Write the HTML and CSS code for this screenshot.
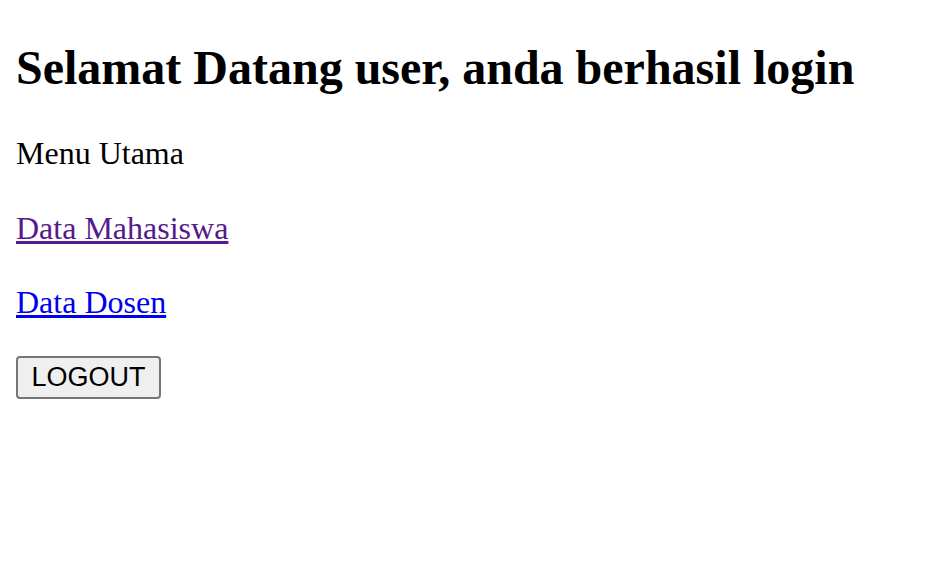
FILE: index.html
```html
<!DOCTYPE html>
<html>
<head>
<meta charset="utf-8">
<title>Menu Utama</title>
<link rel="stylesheet" href="styles.css">
</head>
<body>
<h1 class="title">Selamat Datang user, anda berhasil login</h1>
<p class="line">Menu Utama</p>
<p class="line"><a class="link visited" href="#mhs">Data Mahasiswa</a></p>
<p class="line last"><a class="link" href="#dosen">Data Dosen</a></p>
<button class="logout" type="button">LOGOUT</button>
</body>
</html>
```
FILE: styles.css
```css
body {
  margin: 16px;
  font-family: "Liberation Serif", "Times New Roman", serif;
  font-size: 32px;
  color: #000;
  background: #fff;
}
.title {
  font-size: 48px;
  font-weight: bold;
  margin: 24px 0 40px;
  line-height: 55px;
}
.line {
  margin: 0 0 37.5px;
  line-height: 37px;
}
.line.last {
  margin-bottom: 34.5px;
}
.link {
  color: #0000ee;
  text-decoration: underline;
}
.link.visited {
  color: #551a8b;
}
.logout {
  display: block;
  font-family: "Liberation Sans", Arial, sans-serif;
  font-size: 27px;
  color: #000;
  background: #efefef;
  border: 2px solid #767676;
  border-radius: 4px;
  width: 145px;
  height: 43px;
  padding: 0;
  margin: 0;
}
```
